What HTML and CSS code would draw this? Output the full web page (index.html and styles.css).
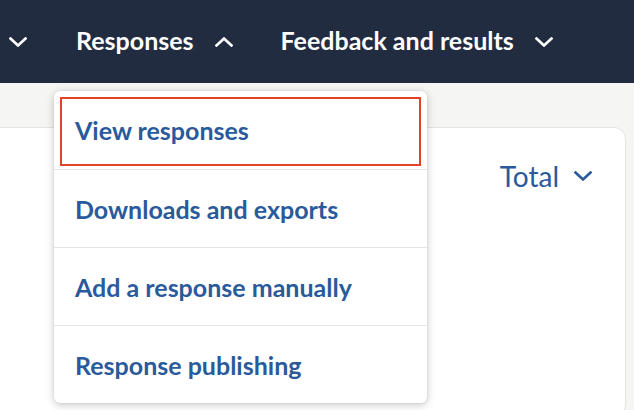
FILE: index.html
```html
<!DOCTYPE html>
<html lang="en">
<head>
<meta charset="utf-8">
<title>Responses menu</title>
<link rel="stylesheet" href="styles.css">
</head>
<body>
<header class="topnav">
  <div class="nav-item nav-item--cut">
    <svg class="chev" viewBox="0 0 18 10" aria-hidden="true"><polyline points="1.5,1.5 9,8.5 16.5,1.5"/></svg>
  </div>
  <div class="nav-item">
    <span class="nav-label">Responses</span>
    <svg class="chev" viewBox="0 0 18 10" aria-hidden="true"><polyline points="1.5,8.5 9,1.5 16.5,8.5"/></svg>
  </div>
  <div class="nav-item">
    <span class="nav-label">Feedback and results</span>
    <svg class="chev" viewBox="0 0 18 10" aria-hidden="true"><polyline points="1.5,1.5 9,8.5 16.5,1.5"/></svg>
  </div>
</header>
<main class="page">
  <section class="card">
    <div class="card-head">
      <button class="select">Total
        <svg class="chev chev--blue" viewBox="0 0 18 10" aria-hidden="true"><polyline points="1.5,1.5 9,8.5 16.5,1.5"/></svg>
      </button>
    </div>
  </section>
  <nav class="dropdown">
    <div class="dd-row dd-row--focus"><a class="dd-link dd-link--focus" href="#">View responses</a></div>
    <div class="dd-row"><a class="dd-link" href="#">Downloads and exports</a></div>
    <div class="dd-row"><a class="dd-link" href="#">Add a response manually</a></div>
    <div class="dd-row"><a class="dd-link" href="#">Response publishing</a></div>
  </nav>
</main>
</body>
</html>
```
FILE: styles.css
```css
* { box-sizing: border-box; }
html, body { margin: 0; padding: 0; }
body {
  width: 634px;
  height: 410px;
  overflow: hidden;
  background: #f5f5f3;
  font-family: Lato, "Open Sans", sans-serif;
}
.topnav {
  height: 83px;
  background: #212c41;
  display: flex;
  align-items: center;
  gap: 49px;
  padding-left: 9px;
  color: #fff;
}
.nav-item {
  display: flex;
  align-items: center;
  gap: 21px;
}
.nav-item + .nav-item + .nav-item { margin-left: -1px; }
.nav-label {
  font-weight: 700;
  font-size: 25px;
  line-height: 1;
  position: relative;
  top: -1px;
}
.chev {
  width: 18px;
  height: 10px;
  fill: none;
  stroke: #fff;
  stroke-width: 2.6;
  stroke-linecap: square;
}
.chev--blue { stroke: #2a5a9b; }
.page {
  position: relative;
  padding-top: 44px;
}
.card {
  margin-left: -20px;
  width: 646px;
  height: 290px;
  background: #fff;
  border: 1px solid #e5e3de;
  border-radius: 12px;
}
.card-head {
  display: flex;
  justify-content: flex-end;
  padding: 31px 33px 0 0;
}
.select {
  display: flex;
  align-items: center;
  gap: 15px;
  background: none;
  border: 0;
  padding: 0;
  font-family: inherit;
  font-size: 28px;
  color: #2a5a9b;
}
.dropdown {
  position: absolute;
  left: 54px;
  top: 8px;
  width: 373px;
  background: #fff;
  border-radius: 6px;
  box-shadow: 0 2px 8px rgba(0,0,0,0.22), 0 0 2px rgba(0,0,0,0.1);
  overflow: hidden;
}
.dd-row {
  height: 78px;
  display: flex;
  align-items: center;
  border-top: 1px solid #e6e4e0;
}
.dd-row:first-child { border-top: 0; height: 78px; }
.dd-row--focus { padding: 6px 6px 3px; align-items: stretch; }
.dd-link {
  display: flex;
  align-items: center;
  padding-left: 21px;
  font-weight: 700;
  font-size: 25px;
  color: #2a5a9b;
  text-decoration: none;
}
.dd-link--focus {
  flex: 1;
  border: 2px solid #e4432b;
  padding-left: 13px;
  padding-bottom: 3px;
}
```
